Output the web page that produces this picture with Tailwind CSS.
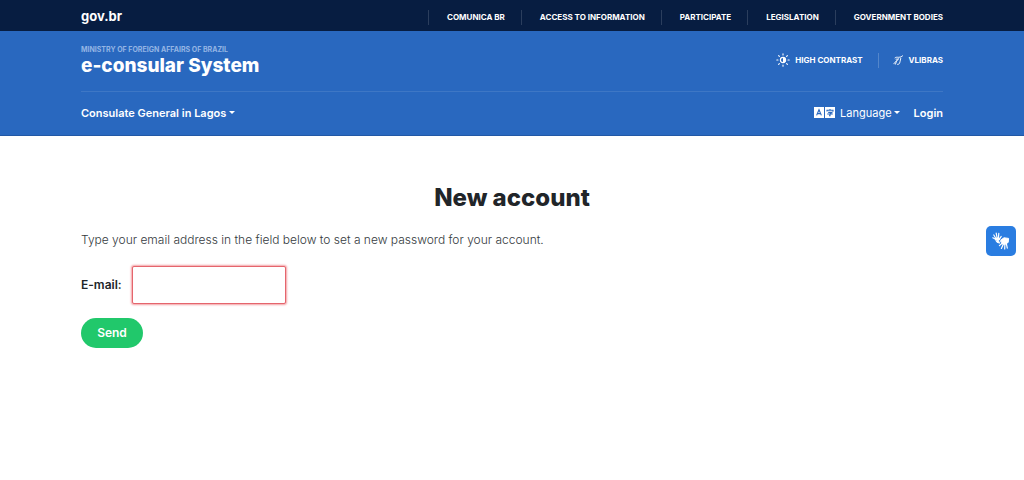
<!DOCTYPE html>
<html lang="en">
<head>
<meta charset="utf-8">
<meta name="viewport" content="width=device-width, initial-scale=1">
<title>e-consular System</title>
<script src="https://cdn.jsdelivr.net/npm/@tailwindcss/browser@4"></script>
</head>
<body class="bg-white font-['Inter','Liberation_Sans',sans-serif] text-[#212529]">
<div class="bg-[#071d41] text-white">
  <div class="mx-[81px] flex h-[31px] items-center justify-between">
    <a href="#" class="text-[13px] leading-4 font-bold">gov.br</a>
    <nav class="flex items-center pt-[3px] text-[8px] leading-[15px] font-bold whitespace-nowrap">
      <a href="#" class="border-l border-white/15 pr-4 pl-[18px]">COMUNICA BR</a>
      <a href="#" class="border-l border-white/15 pr-4 pl-[18px]">ACCESS TO INFORMATION</a>
      <a href="#" class="border-l border-white/15 pr-4 pl-[18px]">PARTICIPATE</a>
      <a href="#" class="border-l border-white/15 pr-4 pl-[18px]">LEGISLATION</a>
      <a href="#" class="border-l border-white/15 pl-[18px]">GOVERNMENT BODIES</a>
    </nav>
  </div>
</div>
<header class="border-b border-[#2258a5] bg-[#2968bf] text-white">
  <div class="mx-[81px]">
    <div class="flex h-[61px] items-center justify-between border-b border-white/10">
      <div>
        <p class="text-[7px] leading-[10px] font-bold text-[#94b5e4]">MINISTRY OF FOREIGN AFFAIRS OF BRAZIL</p>
        <a href="#" class="block text-[19px] leading-[22px] font-extrabold">e-consular System</a>
      </div>
      <div class="flex items-center pb-[2px] text-[8px] leading-[15px] font-bold whitespace-nowrap">
        <a href="#" class="flex items-center gap-[5px] pr-[15px]">
          <svg class="size-[14px]" viewBox="0 0 14 14" fill="none" stroke="currentColor" stroke-width="1.1" stroke-linecap="round"><circle cx="7" cy="7" r="2.6"/><path d="M7 4.4a2.6 2.6 0 0 1 0 5.2z" fill="currentColor" stroke="none"/><path d="M7 .8v1.2M7 12v1.2M.8 7H2M12 7h1.2M2.6 2.6l.8.8M10.6 10.6l.8.8M2.6 11.4l.8-.8M10.6 3.4l.8-.8"/></svg>
          HIGH CONTRAST
        </a>
        <a href="#" class="flex items-center gap-[6px] border-l border-white/20 pl-[14px]">
          <svg class="size-[10px]" viewBox="0 0 10 10" fill="none" stroke="currentColor" stroke-width=".9" stroke-linecap="round" stroke-linejoin="round"><path d="M2 2.8C3.2 1.8 4.4 2.3 5.8 2.3L7.6 2M8.4 1.6L9.6.8M3 4.2L5.4 4M5.4 3.8L3.6 6.2 2.4 9.2M3.6 5.6L.8 8.8M7.8 3.2L7 6.8C6.6 9 5.8 9.4 4.6 9.4"/></svg>
          VLIBRAS
        </a>
      </div>
    </div>
    <div class="flex h-[43px] items-center justify-between pb-[2px] text-[11px] leading-4 font-semibold whitespace-nowrap">
      <button type="button" class="flex items-center gap-[3px]">Consulate General in Lagos
        <svg class="h-[3px] w-[6px]" viewBox="0 0 6 3" fill="currentColor"><path d="M0 0h6L3 3z"/></svg>
      </button>
      <div class="flex items-center gap-[14px]">
        <button type="button" class="flex items-center font-normal">
          <svg class="mr-[5px] h-[11px] w-[21px]" viewBox="0 0 21 11"><path d="M0 0h10v11H0zM11 0h10v11H11z" fill="#fff"/><path d="M2.6 8.4L5 2.7l2.4 5.7M3.4 6.6h3.2M13 4.4V3.2h6v1.2M16 2v1.2M14.2 5.4h3.6L16 6.8v2H15M13.2 7h5.6" fill="none" stroke="#2968bf" stroke-width="1.1"/></svg>
          Language
          <svg class="ml-[2px] h-[3px] w-[6px]" viewBox="0 0 6 3" fill="currentColor"><path d="M0 0h6L3 3z"/></svg>
        </button>
        <a href="#">Login</a>
      </div>
    </div>
  </div>
</header>
<main class="mx-[81px] pt-12">
  <h1 class="text-center text-[24px] leading-7 font-extrabold">New account</h1>
  <p class="mt-5 text-[12px] leading-4 font-light text-[#343a40]">Type your email address in the field below to set a new password for your account.</p>
  <form class="mt-[18px]">
    <div class="flex items-center gap-[10px]">
      <label for="email" class="text-[12px] leading-4 font-semibold">E-mail:</label>
      <input id="email" type="email" class="h-[38px] w-[154px] rounded-[2px] border border-[#e5656d] bg-white px-3 text-[12px] shadow-[0_0_2px_1px_#f3a0a5] outline-none">
    </div>
    <button type="submit" class="mt-[14px] h-[30px] w-[62px] rounded-full bg-[#21c86b] text-[12px] leading-4 font-semibold text-white">Send</button>
  </form>
</main>
<button type="button" aria-label="VLibras" class="fixed top-[226px] right-2 flex size-[30px] items-center justify-center rounded-[5px] bg-[#2a7de1]">
  <svg class="size-5" viewBox="0 0 20 20" fill="none" stroke="#fff" stroke-linecap="round" stroke-linejoin="round"><path d="M4.6 7.5L8 6.6l1 1.6-1.6 1.4 1.2 2.6-2.6-1z" fill="#fff" stroke-width="1"/><path d="M5 8.5L1.8 6.8M5.2 8L2.8 4M6.2 7.5L5.2 2.2M7.4 7.5L7.8 2.4M8.6 8l1.6-2.6" stroke-width="1.2"/><path d="M10.4 8.6l2.6-1.8 4.6.6-.4 4-3.4 2-3-.8z" fill="#fff" stroke-width="1"/><path d="M13 9.2l-3.6 1M11.5 12L8.4 14.6M12.4 13l-2 4.4M13.9 13.2l-.2 4.8M15.3 12.5l1 4.6" stroke-width="1.2"/></svg>
</button>
</body>
</html>
